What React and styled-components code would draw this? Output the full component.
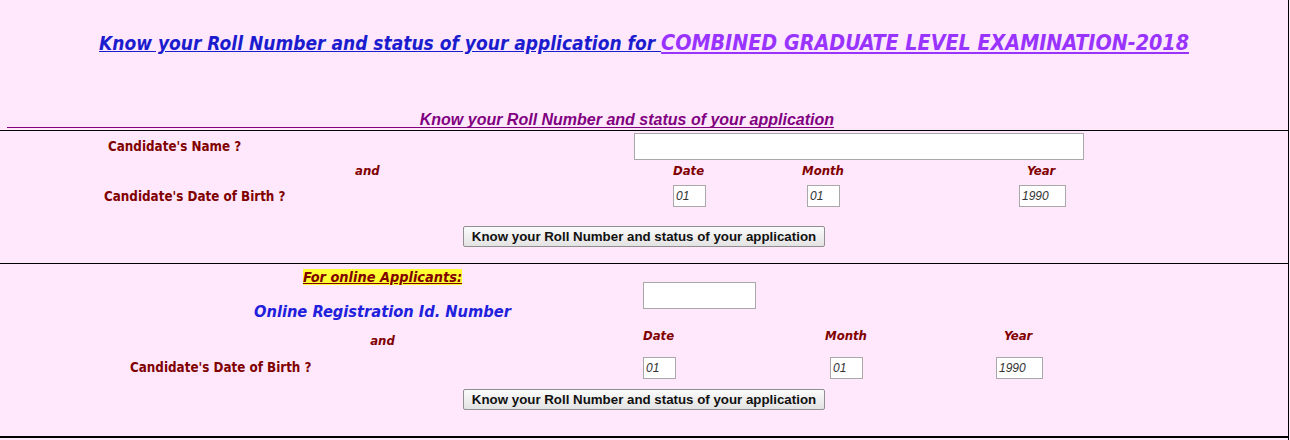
import React from 'react';
import styled, { createGlobalStyle } from 'styled-components';

const GlobalStyle = createGlobalStyle`
  body {
    margin: 0;
    background: #ffe8fc;
    font-family: "DejaVu Sans Condensed", "DejaVu Sans", sans-serif;
  }
`;

const Page = styled.div`
  width: 1289px;
  height: 440px;
  box-sizing: border-box;
  border-right: 1px solid #000;
  background: #ffe8fc;
`;

const Header = styled.div`
  height: 130px;
`;

const Title = styled.h1`
  margin: 0;
  padding-top: 30px;
  text-align: center;
  font: italic bold 19px/26px "DejaVu Sans Condensed", "DejaVu Sans", sans-serif;
`;

const TitleLink = styled.a`
  color: #1c1ccf;
  text-decoration: underline;
`;

const ExamName = styled.a`
  color: #9933ff;
  font-size: 21.3px;
  text-decoration: underline;
`;

const Subtitle = styled.div`
  margin: 57px 0 0 7px;
  width: 827px;
  text-align: right;
  border-bottom: 1px solid #800080;
  color: #800080;
  font: italic bold 16px/14px "Liberation Sans", Arial, sans-serif;
`;

const Section = styled.section`
  border-top: 1px solid #000;
  ${p => p.$last && 'border-bottom: 2px solid #000;'}
`;

const Row = styled.div`
  display: grid;
  grid-template-columns: ${p => p.$cols};
  align-items: center;
  height: ${p => p.$h}px;
`;

const Label = styled.span`
  color: #800000;
  font: bold 13.3px "DejaVu Sans Condensed", "DejaVu Sans", sans-serif;
`;

const Caption = styled.span`
  color: #800000;
  font: italic bold 13px "DejaVu Sans Condensed", "DejaVu Sans", sans-serif;
`;

const Field = styled.input`
  box-sizing: border-box;
  width: ${p => p.$w}px;
  height: ${p => p.$h || 22}px;
  border: 1px solid #a8a8a8;
  background: #fff;
  padding: 0 2px;
  color: #333;
  font: italic 12px "Liberation Sans", Arial, sans-serif;
  outline: none;
`;

const ButtonRow = styled.div`
  display: flex;
  justify-content: center;
  padding: ${p => p.$pad};
`;

const Button = styled.button`
  height: 21px;
  width: 362px;
  padding: 0;
  border: 1px solid #8f8f8f;
  border-radius: 2px;
  background: linear-gradient(#fbfbfb, #e3e3e3);
  color: #111;
  font: bold 13.3px "Liberation Sans", Arial, sans-serif;
`;

const Split = styled.div`
  display: grid;
  grid-template-columns: 505px 1fr;
  column-gap: 8px;
  padding-left: 130px;
  height: 125px;
`;

const LeftCol = styled.div`
  display: flex;
  flex-direction: column;
  text-align: center;
`;

const Cell = styled.div`
  height: ${p => p.$h}px;
  display: flex;
  align-items: center;
  justify-content: ${p => (p.$left ? 'flex-start' : 'center')};
`;

const Note = styled.span`
  background: #ffff33;
  color: #800000;
  text-decoration: underline;
  font: italic bold 14.4px "DejaVu Sans Condensed", "DejaVu Sans", sans-serif;
`;

const RegTitle = styled.span`
  color: #2020dd;
  font: italic bold 16.3px "DejaVu Sans Condensed", "DejaVu Sans", sans-serif;
`;

const RightCol = styled.div`
  display: flex;
  flex-direction: column;
  padding-top: 18px;
`;

const SubRow = styled.div`
  display: grid;
  grid-template-columns: ${p => p.$cols};
  align-items: center;
  height: ${p => p.$h}px;
  margin-top: ${p => p.$mt || 0}px;
`;

export default function App() {
  return (
    <>
      <GlobalStyle />
      <Page>
        <Header>
          <Title>
            <TitleLink>Know your Roll Number and status of your application for </TitleLink>
            <ExamName>COMBINED GRADUATE LEVEL EXAMINATION-2018</ExamName>
          </Title>
          <Subtitle>Know your Roll Number and status of your application</Subtitle>
        </Header>

        <Section>
          <Row $cols="108px 526px 450px" $h={30}>
            <span />
            <Label>Candidate's Name ?</Label>
            <Field $w={450} $h={27} />
          </Row>
          <Row $cols="355px 318px 129px 225px 1fr" $h={19}>
            <span />
            <Caption>and</Caption>
            <Caption>Date</Caption>
            <Caption>Month</Caption>
            <Caption>Year</Caption>
          </Row>
          <Row $cols="104px 569px 134px 212px 1fr" $h={32}>
            <span />
            <Label>Candidate's Date of Birth ?</Label>
            <Field $w={33} defaultValue="01" />
            <Field $w={33} defaultValue="01" />
            <Field $w={47} defaultValue="1990" />
          </Row>
          <ButtonRow $pad="14px 0 16px">
            <Button>Know your Roll Number and status of your application</Button>
          </ButtonRow>
        </Section>

        <Section $last>
          <Split>
            <LeftCol>
              <Cell $h={26}>
                <Note>For online Applicants:</Note>
              </Cell>
              <Cell $h={42}>
                <RegTitle>Online Registration Id. Number</RegTitle>
              </Cell>
              <Cell $h={16}>
                <Caption>and</Caption>
              </Cell>
              <Cell $h={38} $left>
                <Label>Candidate's Date of Birth ?</Label>
              </Cell>
            </LeftCol>
            <RightCol>
              <Field $w={113} $h={27} />
              <SubRow $cols="182px 179px 1fr" $h={18} $mt={17}>
                <Caption>Date</Caption>
                <Caption>Month</Caption>
                <Caption>Year</Caption>
              </SubRow>
              <SubRow $cols="187px 166px 1fr" $h={22} $mt={13}>
                <Field $w={33} defaultValue="01" />
                <Field $w={33} defaultValue="01" />
                <Field $w={47} defaultValue="1990" />
              </SubRow>
            </RightCol>
          </Split>
          <ButtonRow $pad="0 0 26px">
            <Button>Know your Roll Number and status of your application</Button>
          </ButtonRow>
        </Section>
      </Page>
    </>
  );
}
